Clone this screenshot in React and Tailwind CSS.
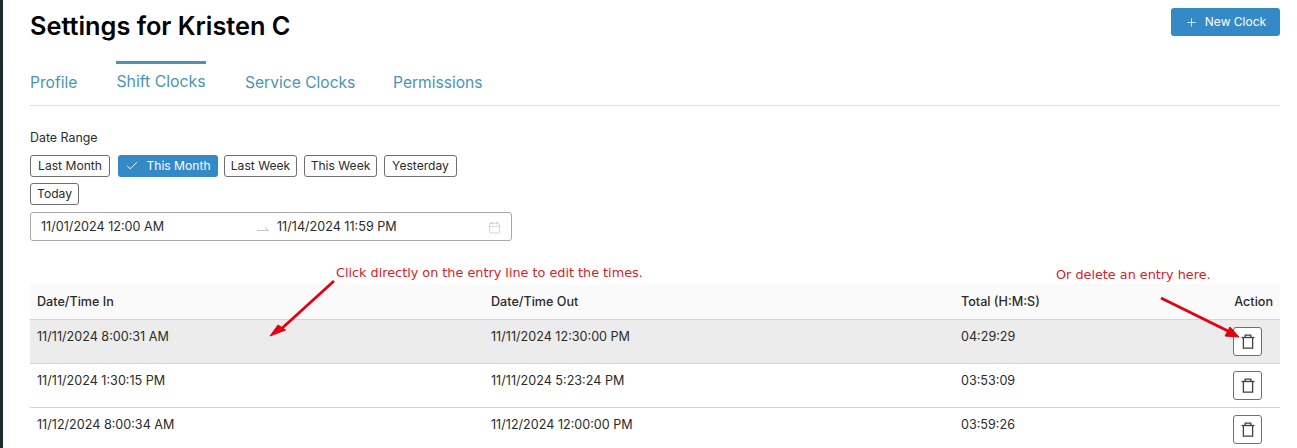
import { Plus, Check, Calendar } from 'lucide-react'

const ranges = [
  { label: 'Last Month', width: 'w-[80px]' },
  { label: 'This Month', width: 'ml-[1px] mr-[-1px] w-[100px]' },
  { label: 'Last Week', width: 'w-[73px]' },
  { label: 'This Week', width: 'w-[73px]' },
  { label: 'Yesterday', width: 'w-[73px]' },
  { label: 'Today', width: 'w-[49px]' },
]
const tabs = [
  { label: 'Profile', width: 'w-[47px]' },
  { label: 'Shift Clocks', width: 'w-[90px]' },
  { label: 'Service Clocks', width: 'w-[109px]' },
  { label: 'Permissions', width: 'w-[91px]' },
]
const rows = [
  ['11/11/2024 8:00:31 AM', '11/11/2024 12:30:00 PM', '04:29:29'],
  ['11/11/2024 1:30:15 PM', '11/11/2024 5:23:24 PM', '03:53:09'],
  ['11/12/2024 8:00:34 AM', '11/12/2024 12:00:00 PM', '03:59:26'],
]

function TrashIcon() {
  return (
    <svg width="14" height="15" viewBox="0 0 14 15" fill="none" stroke="#3f3f3f" strokeWidth="1.3">
      <path d="M0.5 3.5h13" />
      <path d="M4.2 3.5V1.2h5.6v2.3" />
      <path d="M2.4 3.5v10.6h9.2V3.5" />
    </svg>
  )
}

export default function App() {
  return (
    <div className="relative h-[448px] w-[1297px] overflow-hidden bg-white font-['Inter',sans-serif] text-[#1f1f1f]">
      <div className="absolute left-0 top-0 h-full w-[3px] bg-[#1f2a30]" />

      <div className="pl-[30px] pr-[17px]">
        <div className="flex items-start justify-between pt-2">
          <h1 className="pt-[3px] text-[25.3px] leading-[30px] font-semibold text-black">Settings for Kristen C</h1>
          <button className="flex h-[28px] w-[109px] items-center justify-center gap-[7px] rounded-[3px] bg-[#348ac7] text-[12px] text-white">
            <Plus size={13} strokeWidth={1.4} />
            New Clock
          </button>
        </div>

        <div className="mt-[20px] flex h-[45px] gap-[39px] border-b border-[#dfdfdf]">
          {tabs.map((t) => (
            <div
              key={t.label}
              className={
                t.label === 'Shift Clocks'
                  ? `${t.width} h-[44px] whitespace-nowrap border-t-[3px] border-[#4a94b6] pt-[6px] text-center text-[15.8px] leading-[24px] text-[#4a94b6]`
                  : `${t.width} h-[44px] whitespace-nowrap pt-[10px] text-[15.6px] leading-[24px] text-[#4a94b6]`
              }
            >
              {t.label}
            </div>
          ))}
        </div>

        <div className="mt-[24px] text-[12.4px] leading-[16px] text-[#2b2b2b]">Date Range</div>

        <div className="mt-[9px] flex w-[470px] flex-wrap gap-x-[7px] gap-y-[6px]">
          {ranges.map((r) =>
            r.label === 'This Month' ? (
              <div key={r.label} className={`${r.width} flex h-[22px] items-center justify-center gap-[7px] rounded-[3px] bg-[#348ac7] text-[12.1px] text-white`}>
                <Check size={14} strokeWidth={1.6} />
                {r.label}
              </div>
            ) : (
              <div key={r.label} className={`${r.width} flex h-[22px] items-center justify-center rounded-[3px] border border-[#6f6f6f] text-[12.1px] text-[#2b2b2b]`}>
                {r.label}
              </div>
            ),
          )}
        </div>

        <div className="mt-[7px] flex h-[29px] w-[482px] items-center rounded-[3px] border border-[#a8a8a8] pl-[10px] pr-[10px] pt-[1px] text-[12.6px] text-[#2b2b2b]">
          <span className="w-[216px]">11/01/2024 12:00 AM</span>
          <svg className="mr-[8px] mt-[2px]" width="12" height="5" viewBox="0 0 12 5" fill="none" stroke="#c4c4c4">
            <path d="M0 4.5h11.5L8 1.5" />
          </svg>
          <span className="flex-1">11/14/2024 11:59 PM</span>
          <Calendar size={13} strokeWidth={1} className="text-[#b5b5b5]" />
        </div>

        <table className="mt-[43px] w-[1250px] table-fixed border-collapse text-[12.6px] text-[#2b2b2b]">
          <thead>
            <tr className="h-[35px] border-b border-[#d4d4d4] bg-[#fafafa] text-left">
              <th className="w-[454px] pl-[7px] pt-[3px] font-medium">Date/Time In</th>
              <th className="w-[470px] pl-[7px] pt-[3px] font-medium">Date/Time Out</th>
              <th className="pl-[7px] pt-[3px] font-medium">Total (H:M:S)</th>
              <th className="w-[100px] pr-[7px] pt-[3px] text-right font-medium">Action</th>
            </tr>
          </thead>
          <tbody>
            {rows.map((row, i) => (
              <tr key={row[0]} className={i === 0 ? 'h-[44px] border-b border-[#d4d4d4] bg-[#ececec]' : 'h-[44px] border-b border-[#d4d4d4]'}>
                <td className="pb-[7px] pl-[7px]">{row[0]}</td>
                <td className="pb-[7px] pl-[7px]">{row[1]}</td>
                <td className="pb-[7px] pl-[7px]">{row[2]}</td>
                <td className="pr-[18px]">
                  <div className="ml-auto flex h-[29px] w-[29px] items-center justify-center rounded-[3px] border border-[#6f6f6f] bg-white">
                    <TrashIcon />
                  </div>
                </td>
              </tr>
            ))}
          </tbody>
        </table>
      </div>

      {/* annotations drawn on top of the screenshot */}
      <div className="absolute left-[336px] top-[265px] font-['DejaVu_Sans',sans-serif] text-[12.8px] leading-[16px] text-[#d8202a]">
        Click directly on the entry line to edit the times.
      </div>
      <div className="absolute left-[1056px] top-[267px] font-['DejaVu_Sans',sans-serif] text-[12.8px] leading-[16px] text-[#d8202a]">
        Or delete an entry here.
      </div>
      <svg className="absolute left-0 top-0" width="1297" height="448" fill="none">
        <path d="M334 281L279 331" stroke="#e3000f" strokeWidth="2.8" />
        <path d="M270 336L278 325L285.5 330Z" fill="#e3000f" stroke="#e3000f" />
        <path d="M1161 298L1230 332" stroke="#e3000f" strokeWidth="2.8" />
        <path d="M1239 337L1230 327L1225 336Z" fill="#e3000f" stroke="#e3000f" />
      </svg>
    </div>
  )
}
